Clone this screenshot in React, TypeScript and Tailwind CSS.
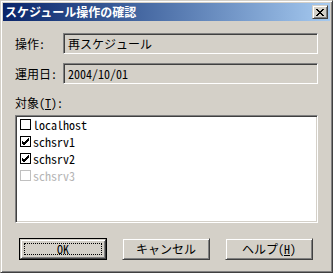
const ui = "font-['Noto_Sans_Mono_CJK_JP','Noto_Sans_CJK_JP',sans-serif] text-[12px] leading-[14px]";

const raised =
  "border border-t-[#d4d0c8] border-l-[#d4d0c8] border-r-[#404040] border-b-[#404040] shadow-[inset_1px_1px_#ffffff,inset_-1px_-1px_#808080]";

const sunken =
  "border border-t-[#808080] border-l-[#808080] border-r-white border-b-white shadow-[inset_1px_1px_#404040,inset_-1px_-1px_#d4d0c8]";

interface Target {
  name: string;
  checked: boolean;
  disabled?: boolean;
}

const targets: Target[] = [
  { name: "localhost", checked: false },
  { name: "schsrv1", checked: true },
  { name: "schsrv2", checked: true },
  { name: "schsrv3", checked: false, disabled: true },
];

function CheckBox({ checked, disabled }: { checked: boolean; disabled?: boolean }) {
  return (
    <span
      className={`w-[11px] h-[11px] border flex items-center justify-center bg-white ${
        disabled ? "border-[#c0c0c0]" : "border-black"
      }`}
    >
      {checked && (
        <svg width="9" height="9" viewBox="0 0 9 9">
          <path d="M1 4 L3 6 L8 1 M1 5 L3 7 L8 2 M1 6 L3 8 L8 3" stroke="black" strokeWidth="1" fill="none" />
        </svg>
      )}
    </span>
  );
}

function Field({ value }: { value: string }) {
  return (
    <div className={`w-[255px] h-[21px] ${sunken} bg-[#d4d0c8] flex items-center pl-[4px] text-black`}>
      {value}
    </div>
  );
}

export default function App() {
  return (
    <div
      className={`w-[333px] h-[273px] bg-[#d4d0c8] p-[2px] ${raised} ${ui} text-black flex flex-col select-none`}
    >
      {/* title bar */}
      <div className="h-[18px] flex items-center justify-between bg-gradient-to-r from-[#0a246a] to-[#a6caf0] pl-[2px] pr-[2px]">
        <span className="text-white font-bold text-[12px] font-['Noto_Sans_CJK_JP',sans-serif] leading-[16px]">
          スケジュール操作の確認
        </span>
        <button className={`w-[16px] h-[14px] bg-[#d4d0c8] ${raised} flex items-center justify-center`}>
          <svg width="8" height="7" viewBox="0 0 8 7">
            <path d="M0 0h2v1h1v1h2V1h1V0h2v1H7v1H6v1H5v1h1v1h1v1h1v1H6V6H5V5H3v1H2v1H0V6h1V5h1V4h1V3H2V2H1V1H0z" fill="black" />
          </svg>
        </button>
      </div>

      <div className="flex flex-col pl-[12px] pt-[12px]">
        <div className="flex items-center">
          <span className="w-[48px]">操作:</span>
          <Field value="再スケジュール" />
        </div>
        <div className="flex items-center mt-[9px]">
          <span className="w-[48px]">運用日:</span>
          <Field value="2004/10/01" />
        </div>

        <div className="mt-[12px] h-[14px]">
          対象(<u>T</u>):
        </div>

        <div className={`mt-[5px] w-[303px] h-[108px] bg-white ${sunken} px-[1px]`}>
          {targets.map((t) => (
            <div key={t.name} className="h-[17px] flex items-center pl-[3px] gap-[2px]">
              <CheckBox checked={t.checked} disabled={t.disabled} />
              <span className={t.disabled ? "text-[#b4b4b4]" : "text-black"}>{t.name}</span>
            </div>
          ))}
        </div>

        <div className="flex gap-[15px] mt-[15px] ml-[4px]">
          <button className="w-[88px] h-[22px] border border-black p-0">
            <div className={`w-full h-full ${raised} bg-[#d4d0c8] p-[3px]`}>
              <div className="w-full h-full border border-dotted border-black flex items-center justify-center">
                OK
              </div>
            </div>
          </button>
          <button className={`w-[88px] h-[22px] ${raised} bg-[#d4d0c8] flex items-center justify-center`}>
            キャンセル
          </button>
          <button className={`w-[88px] h-[22px] ${raised} bg-[#d4d0c8] flex items-center justify-center`}>
            ヘルプ(<u>H</u>)
          </button>
        </div>
      </div>
    </div>
  );
}
